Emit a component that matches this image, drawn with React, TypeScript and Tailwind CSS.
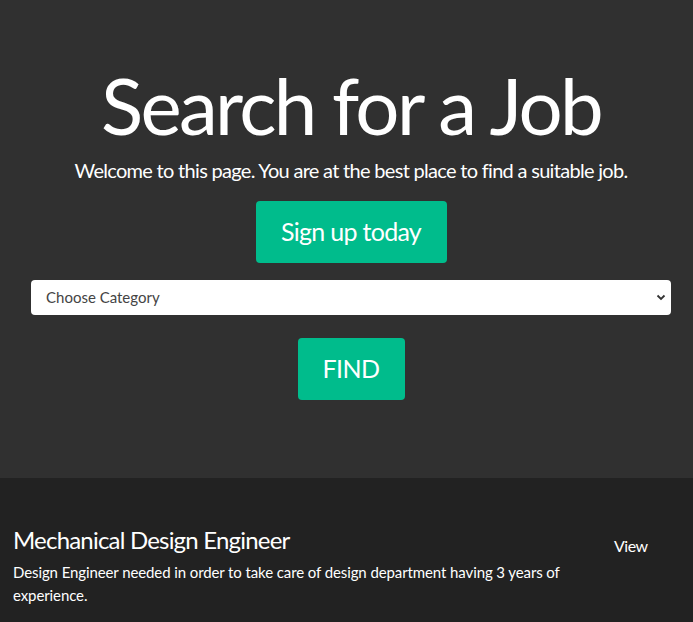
import React from "react";

export default function App() {
  return (
    <div className="min-h-[622px] bg-[#222222] text-white" style={{ fontFamily: "Lato, 'Open Sans', sans-serif" }}>
      <section className="bg-[#303030] flex flex-col items-center pt-[63px] pb-[78px] pl-[31px] pr-[22px]">
        <h1 className="text-[78px] leading-[84px] font-normal tracking-[-2.65px] text-white">Search for a Job</h1>
        <p className="mt-[8px] text-[20px] leading-[30px] font-normal tracking-[-0.7px]">Welcome to this page. You are at the best place to find a suitable job.</p>
        <button className="mt-[16px] h-[62px] w-[191px] rounded-[4px] bg-[#00bc8c] text-[25px] tracking-[-0.7px] text-white">Sign up today</button>
        <div className="relative mt-[17px] w-full">
          <select className="w-full h-[35px] rounded-[4px] bg-white text-[#444] text-[15px] pl-[15px] pr-[30px] appearance-none outline-none">
            <option>Choose Category</option>
          </select>
          <svg className="absolute right-[5px] top-[12px]" width="10" height="10" viewBox="0 0 10 10">
            <path d="M1.5 3.5 L5 7 L8.5 3.5" stroke="#333" strokeWidth="1.8" fill="none" />
          </svg>
        </div>
        <button className="mt-[23px] h-[62px] w-[107px] rounded-[4px] bg-[#00bc8c] text-[25px] tracking-[-0.5px] text-white">FIND</button>
      </section>
      <section className="flex px-[13px] pt-[46px] pb-[20px]">
        <div className="w-[580px]">
          <h2 className="text-[24px] leading-[32px] tracking-[-0.8px]">Mechanical Design Engineer</h2>
          <p className="mt-[5px] text-[15px] leading-[23px] tracking-[-0.1px]">Design Engineer needed in order to take care of design department having 3 years of experience.</p>
        </div>
        <div className="pl-[21px] pt-[10px] text-[16px] tracking-[-0.5px]">View</div>
      </section>
    </div>
  );
}
